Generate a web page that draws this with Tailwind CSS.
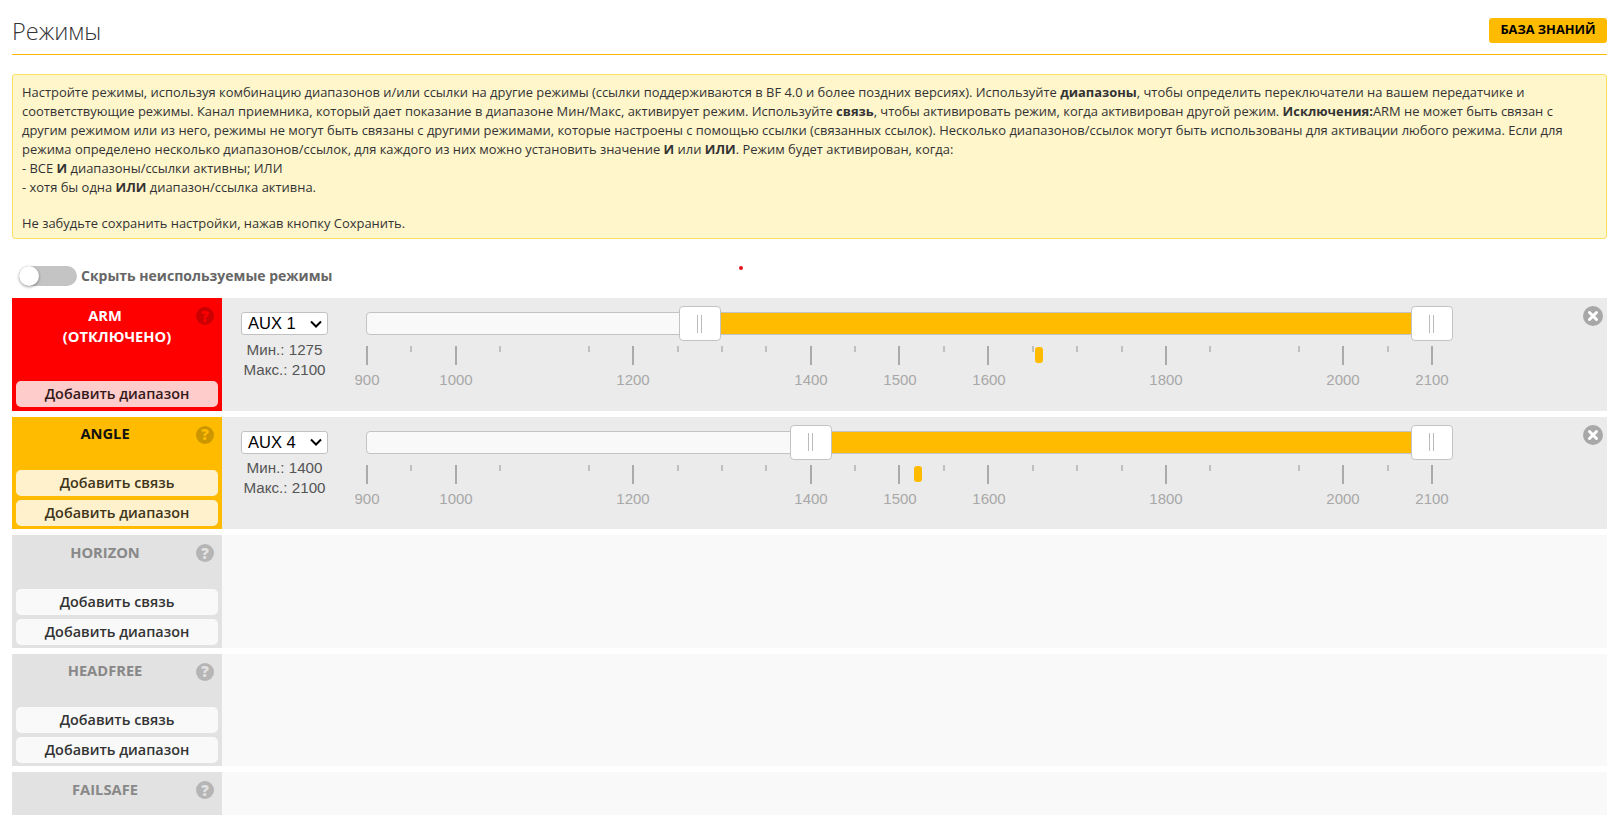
<!DOCTYPE html>
<html lang="ru">
<head>
<meta charset="utf-8">
<title>Режимы</title>
<script src="https://cdn.jsdelivr.net/npm/@tailwindcss/browser@4"></script>
</head>
<body class="bg-white">
<div class="h-[815px] overflow-hidden pl-3 pr-[5px] font-['Open_Sans',sans-serif] text-[#333]">
  <header class="relative flex h-[55px] items-center justify-between border-b border-[#ffbb00]">
    <h1 class="text-[23.5px] font-light leading-none text-[#333] mt-[10px]">Режимы</h1>
    <a class="mt-[6px] flex h-[25px] w-[118px] items-center justify-center rounded-[3px] bg-[#ffbb00] text-[12.8px] font-bold text-black">БАЗА ЗНАНИЙ</a>
  </header>

  <div class="mt-[19px] h-[165px] rounded-[3px] border border-[#ffe066] bg-[#fff6cc] px-[9px] pt-[7.5px] text-[12.93px] leading-[19px] text-[#333]">
    Настройте режимы, используя комбинацию диапазонов и/или ссылки на другие режимы (ссылки поддерживаются в BF 4.0 и более поздних версиях). Используйте <b>диапазоны</b>, чтобы определить переключатели на вашем передатчике и<br>
    соответствующие режимы. Канал приемника, который дает показание в диапазоне Мин/Макс, активирует режим. Используйте <b>связь</b>, чтобы активировать режим, когда активирован другой режим. <b>Исключения:</b>ARM не может быть связан с<br>
    другим режимом или из него, режимы не могут быть связаны с другими режимами, которые настроены с помощью ссылки (связанных ссылок). Несколько диапазонов/ссылок могут быть использованы для активации любого режима. Если для<br>
    режима определено несколько диапазонов/ссылок, для каждого из них можно установить значение <b>И</b> или <b>ИЛИ</b>. Режим будет активирован, когда:<br>
    - ВСЕ <b>И</b> диапазоны/ссылки активны; ИЛИ<br>
    - хотя бы одна <b>ИЛИ</b> диапазон/ссылка активна.<br>
    <div class="mt-[17.5px]">Не забудьте сохранить настройки, нажав кнопку Сохранить.</div>
  </div>

  <div class="relative mt-[26px] flex h-[21px] items-center pl-[7px]">
    <span class="relative block h-5 w-[58px] rounded-full bg-[#c4c4c4]">
      <span class="absolute left-0 top-0 block h-5 w-5 rounded-full bg-white shadow-[0_1px_3px_rgba(0,0,0,0.4)]"></span>
    </span>
    <span class="ml-[4px] text-[14px] font-bold text-[#666]">Скрыть неиспользуемые режимы</span>
    <span class="absolute left-[727px] top-[1px] h-[4px] w-[4px] rounded-full bg-[#e2161c]"></span>
  </div>

  <div class="mt-[12px] flex flex-col gap-[6px]">
    <!-- ARM -->
    <section class="flex h-[112.5px] bg-[#ebebeb]">
      <div class="relative flex w-[210px] shrink-0 flex-col bg-[#ff0000] px-1 pb-1">
        <div class="w-[178px] pt-[6.5px] text-center text-[14.7px] font-bold leading-[21px] text-white">ARM</div>
        <div class="text-center text-[14.7px] font-bold leading-[21px] text-white">(ОТКЛЮЧЕНО)</div>
        <span class="absolute left-[184px] top-[9px] flex h-[18px] w-[18px] items-center justify-center rounded-full bg-[#cc0000] text-[15px] font-extrabold leading-none text-[#ff0000]">?</span>
        <div class="mt-auto flex h-[26px] items-center justify-center rounded-[5px] bg-[#ffcccc] text-[14.4px] font-semibold text-[#331a1a]">Добавить диапазон</div>
      </div>
      <div class="relative flex flex-1">
        <div class="ml-[19px] mt-[14px] flex w-[87px] shrink-0 flex-col items-center font-['Liberation_Sans',sans-serif]">
          <div class="flex h-[23px] w-[87px] items-center justify-between rounded-[3px] border border-[#c2c2c2] bg-white pl-[6px] pr-[5px] text-[16.5px] text-black">AUX 1
            <svg width="12" height="8" viewBox="0 0 12 8" fill="none" stroke="#000" stroke-width="2"><path d="M1 1.5 6 6.5 11 1.5"/></svg>
          </div>
          <div class="mt-[5px] text-[15.2px] leading-[20px] text-[#555]">Мин.: 1275</div>
          <div class="text-[15.2px] leading-[20px] text-[#555]">Макс.: 2100</div>
        </div>
        <div class="relative ml-[38px] mt-[14px] h-[80px] w-[1066px]">
          <div class="h-[23px] rounded-[4px] border border-[#c3c3c3] bg-[#f9f9f9]"></div>
          <div class="absolute left-[333px] right-0 top-0 h-[23px] border-y border-[#c3c3c3] bg-[#ffbb00]"></div>
          <span class="absolute left-[313px] top-[-6px] flex h-[35px] w-[42px] items-center justify-center gap-[3px] rounded-[4px] border border-[#c3c3c3] bg-white pr-[1px]"><i class="h-[18px] w-px bg-[#bbb]"></i><i class="h-[18px] w-px bg-[#bbb]"></i></span>
          <span class="absolute left-[1045px] top-[-6px] flex h-[35px] w-[42px] items-center justify-center gap-[3px] rounded-[4px] border border-[#c3c3c3] bg-white pr-[1px]"><i class="h-[18px] w-px bg-[#bbb]"></i><i class="h-[18px] w-px bg-[#bbb]"></i></span>
          <span class="absolute left-[44px] top-[34px] h-[6px] w-[2px] bg-[#c0c0c0]"></span><span class="absolute left-[133px] top-[34px] h-[6px] w-[2px] bg-[#c0c0c0]"></span><span class="absolute left-[222px] top-[34px] h-[6px] w-[2px] bg-[#c0c0c0]"></span><span class="absolute left-[311px] top-[34px] h-[6px] w-[2px] bg-[#c0c0c0]"></span><span class="absolute left-[355px] top-[34px] h-[6px] w-[2px] bg-[#c0c0c0]"></span><span class="absolute left-[399px] top-[34px] h-[6px] w-[2px] bg-[#c0c0c0]"></span><span class="absolute left-[488px] top-[34px] h-[6px] w-[2px] bg-[#c0c0c0]"></span><span class="absolute left-[577px] top-[34px] h-[6px] w-[2px] bg-[#c0c0c0]"></span><span class="absolute left-[666px] top-[34px] h-[6px] w-[2px] bg-[#c0c0c0]"></span><span class="absolute left-[710px] top-[34px] h-[6px] w-[2px] bg-[#c0c0c0]"></span><span class="absolute left-[755px] top-[34px] h-[6px] w-[2px] bg-[#c0c0c0]"></span><span class="absolute left-[843px] top-[34px] h-[6px] w-[2px] bg-[#c0c0c0]"></span><span class="absolute left-[932px] top-[34px] h-[6px] w-[2px] bg-[#c0c0c0]"></span><span class="absolute left-[1021px] top-[34px] h-[6px] w-[2px] bg-[#c0c0c0]"></span>
          <span class="absolute left-[0px] top-[34px] h-[19px] w-[2px] bg-[#aaa]"></span><span class="absolute left-[89px] top-[34px] h-[19px] w-[2px] bg-[#aaa]"></span><span class="absolute left-[266px] top-[34px] h-[19px] w-[2px] bg-[#aaa]"></span><span class="absolute left-[444px] top-[34px] h-[19px] w-[2px] bg-[#aaa]"></span><span class="absolute left-[532px] top-[34px] h-[19px] w-[2px] bg-[#aaa]"></span><span class="absolute left-[621px] top-[34px] h-[19px] w-[2px] bg-[#aaa]"></span><span class="absolute left-[799px] top-[34px] h-[19px] w-[2px] bg-[#aaa]"></span><span class="absolute left-[976px] top-[34px] h-[19px] w-[2px] bg-[#aaa]"></span><span class="absolute left-[1065px] top-[34px] h-[19px] w-[2px] bg-[#aaa]"></span>
          <span class="absolute left-[669px] top-[35px] h-4 w-2 rounded-[3px] bg-[#ffbb00]"></span>
          <div class="font-['Liberation_Sans',sans-serif] text-[15px] leading-[18px] text-[#a8a8a8]">
            <span class="absolute left-[1px] top-[59px] -translate-x-1/2">900</span><span class="absolute left-[90px] top-[59px] -translate-x-1/2">1000</span><span class="absolute left-[267px] top-[59px] -translate-x-1/2">1200</span><span class="absolute left-[445px] top-[59px] -translate-x-1/2">1400</span><span class="absolute left-[534px] top-[59px] -translate-x-1/2">1500</span><span class="absolute left-[623px] top-[59px] -translate-x-1/2">1600</span><span class="absolute left-[800px] top-[59px] -translate-x-1/2">1800</span><span class="absolute left-[977px] top-[59px] -translate-x-1/2">2000</span><span class="absolute left-[1066px] top-[59px] -translate-x-1/2">2100</span>
          </div>
        </div>
        <svg class="absolute left-[1361px] top-[8px]" width="20" height="20" viewBox="0 0 20 20"><circle cx="10" cy="10" r="10" fill="#a8a8a8"/><path d="M6.5 6.5 13.5 13.5M13.5 6.5 6.5 13.5" stroke="#fff" stroke-width="3" stroke-linecap="round"/></svg>
      </div>
    </section>

    <!-- ANGLE -->
    <section class="flex h-[112.5px] bg-[#ebebeb]">
      <div class="relative flex w-[210px] shrink-0 flex-col bg-[#ffbb00] px-1 pb-[3px]">
        <div class="w-[178px] pt-[6.5px] text-center text-[14.7px] font-bold leading-[21px] text-[#111]">ANGLE</div>
        <span class="absolute left-[184px] top-[9px] flex h-[18px] w-[18px] items-center justify-center rounded-full bg-[#cc9600] text-[15px] font-extrabold leading-none text-[#ffbb00]">?</span>
        <div class="mt-auto flex h-[26px] items-center justify-center rounded-[5px] bg-[#fff1cc] text-[14.4px] font-semibold text-[#40351a]">Добавить связь</div>
        <div class="mt-1 flex h-[26px] items-center justify-center rounded-[5px] bg-[#fff1cc] text-[14.4px] font-semibold text-[#40351a]">Добавить диапазон</div>
      </div>
      <div class="relative flex flex-1">
        <div class="ml-[19px] mt-[14px] flex w-[87px] shrink-0 flex-col items-center font-['Liberation_Sans',sans-serif]">
          <div class="flex h-[23px] w-[87px] items-center justify-between rounded-[3px] border border-[#c2c2c2] bg-white pl-[6px] pr-[5px] text-[16.5px] text-black">AUX 4
            <svg width="12" height="8" viewBox="0 0 12 8" fill="none" stroke="#000" stroke-width="2"><path d="M1 1.5 6 6.5 11 1.5"/></svg>
          </div>
          <div class="mt-[4px] text-[15.2px] leading-[20px] text-[#555]">Мин.: 1400</div>
          <div class="text-[15.2px] leading-[20px] text-[#555]">Макс.: 2100</div>
        </div>
        <div class="relative ml-[38px] mt-[14px] h-[80px] w-[1066px]">
          <div class="h-[23px] rounded-[4px] border border-[#c3c3c3] bg-[#f9f9f9]"></div>
          <div class="absolute left-[444px] right-0 top-0 h-[23px] border-y border-[#c3c3c3] bg-[#ffbb00]"></div>
          <span class="absolute left-[424px] top-[-6px] flex h-[35px] w-[42px] items-center justify-center gap-[3px] rounded-[4px] border border-[#c3c3c3] bg-white pr-[1px]"><i class="h-[18px] w-px bg-[#bbb]"></i><i class="h-[18px] w-px bg-[#bbb]"></i></span>
          <span class="absolute left-[1045px] top-[-6px] flex h-[35px] w-[42px] items-center justify-center gap-[3px] rounded-[4px] border border-[#c3c3c3] bg-white pr-[1px]"><i class="h-[18px] w-px bg-[#bbb]"></i><i class="h-[18px] w-px bg-[#bbb]"></i></span>
          <span class="absolute left-[44px] top-[34px] h-[6px] w-[2px] bg-[#c0c0c0]"></span><span class="absolute left-[133px] top-[34px] h-[6px] w-[2px] bg-[#c0c0c0]"></span><span class="absolute left-[222px] top-[34px] h-[6px] w-[2px] bg-[#c0c0c0]"></span><span class="absolute left-[311px] top-[34px] h-[6px] w-[2px] bg-[#c0c0c0]"></span><span class="absolute left-[355px] top-[34px] h-[6px] w-[2px] bg-[#c0c0c0]"></span><span class="absolute left-[399px] top-[34px] h-[6px] w-[2px] bg-[#c0c0c0]"></span><span class="absolute left-[488px] top-[34px] h-[6px] w-[2px] bg-[#c0c0c0]"></span><span class="absolute left-[577px] top-[34px] h-[6px] w-[2px] bg-[#c0c0c0]"></span><span class="absolute left-[666px] top-[34px] h-[6px] w-[2px] bg-[#c0c0c0]"></span><span class="absolute left-[710px] top-[34px] h-[6px] w-[2px] bg-[#c0c0c0]"></span><span class="absolute left-[755px] top-[34px] h-[6px] w-[2px] bg-[#c0c0c0]"></span><span class="absolute left-[843px] top-[34px] h-[6px] w-[2px] bg-[#c0c0c0]"></span><span class="absolute left-[932px] top-[34px] h-[6px] w-[2px] bg-[#c0c0c0]"></span><span class="absolute left-[1021px] top-[34px] h-[6px] w-[2px] bg-[#c0c0c0]"></span>
          <span class="absolute left-[0px] top-[34px] h-[19px] w-[2px] bg-[#aaa]"></span><span class="absolute left-[89px] top-[34px] h-[19px] w-[2px] bg-[#aaa]"></span><span class="absolute left-[266px] top-[34px] h-[19px] w-[2px] bg-[#aaa]"></span><span class="absolute left-[444px] top-[34px] h-[19px] w-[2px] bg-[#aaa]"></span><span class="absolute left-[532px] top-[34px] h-[19px] w-[2px] bg-[#aaa]"></span><span class="absolute left-[621px] top-[34px] h-[19px] w-[2px] bg-[#aaa]"></span><span class="absolute left-[799px] top-[34px] h-[19px] w-[2px] bg-[#aaa]"></span><span class="absolute left-[976px] top-[34px] h-[19px] w-[2px] bg-[#aaa]"></span><span class="absolute left-[1065px] top-[34px] h-[19px] w-[2px] bg-[#aaa]"></span>
          <span class="absolute left-[548px] top-[35px] h-4 w-2 rounded-[3px] bg-[#ffbb00]"></span>
          <div class="font-['Liberation_Sans',sans-serif] text-[15px] leading-[18px] text-[#a8a8a8]">
            <span class="absolute left-[1px] top-[59px] -translate-x-1/2">900</span><span class="absolute left-[90px] top-[59px] -translate-x-1/2">1000</span><span class="absolute left-[267px] top-[59px] -translate-x-1/2">1200</span><span class="absolute left-[445px] top-[59px] -translate-x-1/2">1400</span><span class="absolute left-[534px] top-[59px] -translate-x-1/2">1500</span><span class="absolute left-[623px] top-[59px] -translate-x-1/2">1600</span><span class="absolute left-[800px] top-[59px] -translate-x-1/2">1800</span><span class="absolute left-[977px] top-[59px] -translate-x-1/2">2000</span><span class="absolute left-[1066px] top-[59px] -translate-x-1/2">2100</span>
          </div>
        </div>
        <svg class="absolute left-[1361px] top-[8px]" width="20" height="20" viewBox="0 0 20 20"><circle cx="10" cy="10" r="10" fill="#a8a8a8"/><path d="M6.5 6.5 13.5 13.5M13.5 6.5 6.5 13.5" stroke="#fff" stroke-width="3" stroke-linecap="round"/></svg>
      </div>
    </section>

    <!-- HORIZON -->
    <section class="flex h-[112.5px] bg-[#f9f9f9]">
      <div class="relative flex w-[210px] shrink-0 flex-col bg-[#e2e2e2] px-1 pb-[3px]">
        <div class="w-[178px] pt-[6.5px] text-center text-[14.7px] font-bold leading-[21px] text-[#888]">HORIZON</div>
        <span class="absolute left-[184px] top-[9px] flex h-[18px] w-[18px] items-center justify-center rounded-full bg-[#b5b5b5] text-[15px] font-extrabold leading-none text-[#e2e2e2]">?</span>
        <div class="mt-auto flex h-[26px] items-center justify-center rounded-[5px] bg-[#f9f9f9] text-[14.4px] font-semibold text-[#333]">Добавить связь</div>
        <div class="mt-1 flex h-[26px] items-center justify-center rounded-[5px] bg-[#f9f9f9] text-[14.4px] font-semibold text-[#333]">Добавить диапазон</div>
      </div>
    </section>

    <!-- HEADFREE -->
    <section class="flex h-[112.5px] bg-[#f9f9f9]">
      <div class="relative flex w-[210px] shrink-0 flex-col bg-[#e2e2e2] px-1 pb-[3px]">
        <div class="w-[178px] pt-[6.5px] text-center text-[14.7px] font-bold leading-[21px] text-[#888]">HEADFREE</div>
        <span class="absolute left-[184px] top-[9px] flex h-[18px] w-[18px] items-center justify-center rounded-full bg-[#b5b5b5] text-[15px] font-extrabold leading-none text-[#e2e2e2]">?</span>
        <div class="mt-auto flex h-[26px] items-center justify-center rounded-[5px] bg-[#f9f9f9] text-[14.4px] font-semibold text-[#333]">Добавить связь</div>
        <div class="mt-1 flex h-[26px] items-center justify-center rounded-[5px] bg-[#f9f9f9] text-[14.4px] font-semibold text-[#333]">Добавить диапазон</div>
      </div>
    </section>

    <!-- FAILSAFE -->
    <section class="flex h-[112.5px] bg-[#f9f9f9]">
      <div class="relative flex w-[210px] shrink-0 flex-col bg-[#e2e2e2] px-1 pb-[3px]">
        <div class="w-[178px] pt-[6.5px] text-center text-[14.7px] font-bold leading-[21px] text-[#888]">FAILSAFE</div>
        <span class="absolute left-[184px] top-[9px] flex h-[18px] w-[18px] items-center justify-center rounded-full bg-[#b5b5b5] text-[15px] font-extrabold leading-none text-[#e2e2e2]">?</span>
      </div>
    </section>
  </div>
</div>
</body>
</html>
